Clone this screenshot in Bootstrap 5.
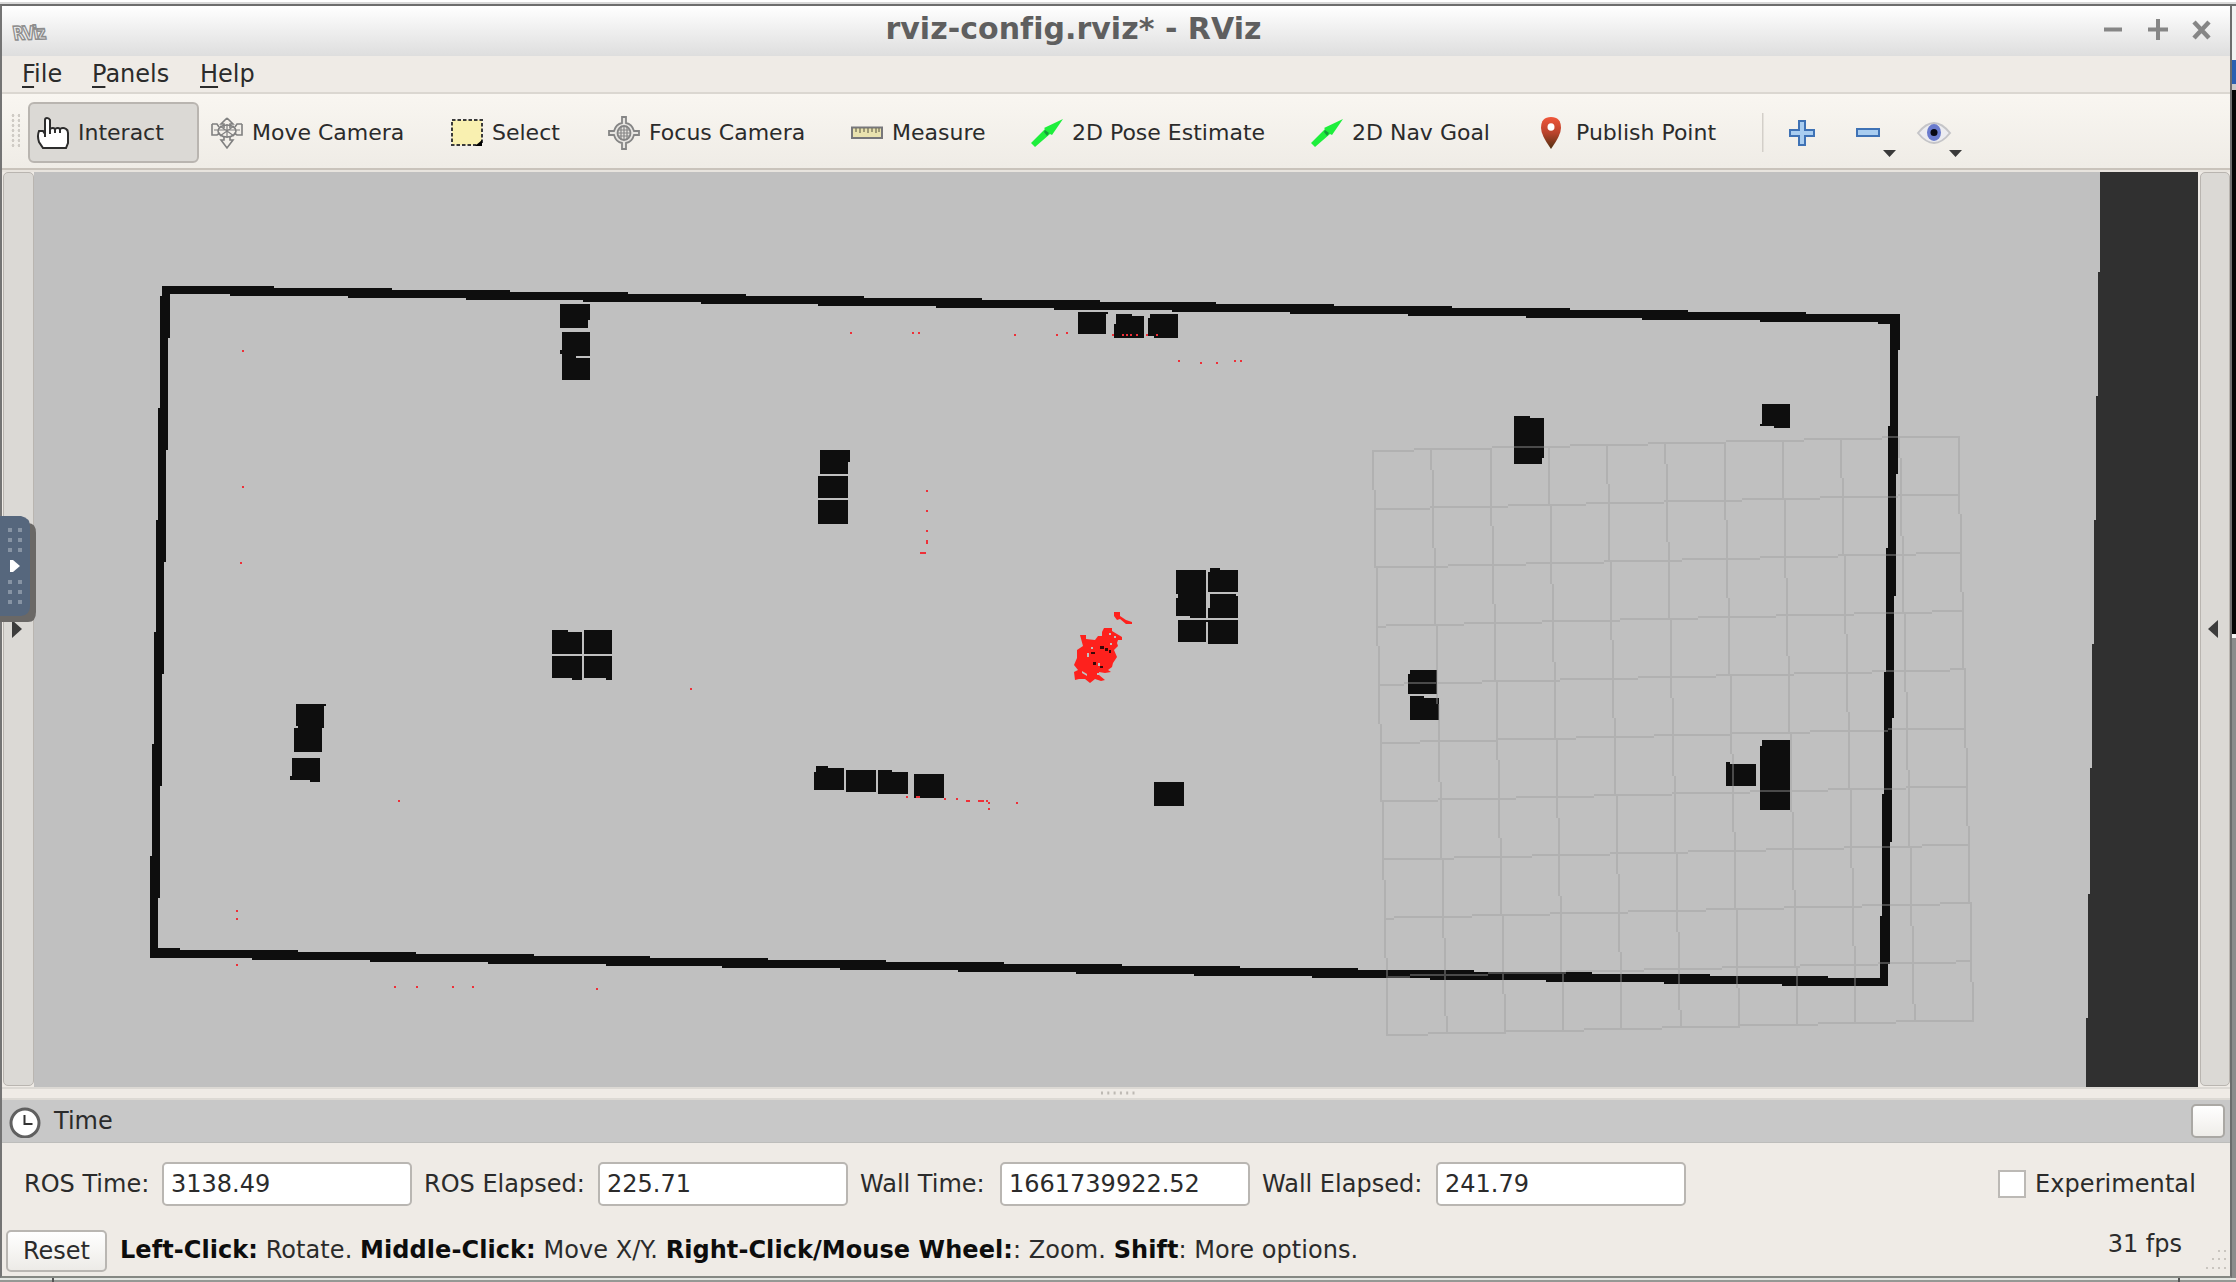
<!DOCTYPE html>
<html lang="en">
<head>
<meta charset="utf-8">
<title>rviz-config.rviz* - RViz</title>
<link href="https://cdn.jsdelivr.net/npm/bootstrap@5.3.0/dist/css/bootstrap.min.css" rel="stylesheet">
<script src="https://cdn.jsdelivr.net/npm/bootstrap@5.3.0/dist/js/bootstrap.bundle.min.js"></script>
<style>
body{width:2236px;height:1282px;overflow:hidden;background:#fff;font-family:"DejaVu Sans",sans-serif;font-size:24px;line-height:28px;color:#2b2b2b;white-space:nowrap}
svg{display:block;flex:none}
.desk{width:2236px;height:1282px}
.desk-top{height:4px;background:linear-gradient(#fff 0 2px,#d9d9d9 2px)}
.win{width:2232px;height:1274px;border:2px solid #6d6d6d;border-left-color:#747474;border-bottom-color:#858883;background:#efebe6}
.backdrop{width:4px;height:1274px;background:linear-gradient(#6d6d6d 0 2px,#f2f2f2 2px 56px,#2c5fb0 56px 80px,#c9c9c9 80px 86px,#050505 86px 630px,#f4f4f4 630px 634px,#8c8c8c 634px)}
.title-bar{height:50px;background:linear-gradient(#fff,#dedede)}
.title-left{width:160px}
.title-right{width:245px}
.title-text{font-weight:700;font-size:30px;line-height:36px;letter-spacing:.04px;color:#5f5f5f;margin-top:-4px}
.menu-row{height:36px;padding-left:20px}
.menu-row u{text-decoration-thickness:2px;text-underline-offset:4px}
.tool-row{height:80px;border-top:2px solid #dbd7d1;background:linear-gradient(#f9f6f1,#efece6 74px,#c9c3bb 74px 76px,#e8e4de 76px);padding:8px 0 0 26px}
.tool{height:61px;padding-left:9px;gap:9px;font-size:22px}
.tool.on{background:#dbd9d5;border:2px solid #b9b5b0;border-radius:6px;padding-left:7px}
.grip{width:10px;height:36px;margin:11px 0 0 -18px;background:radial-gradient(circle,#cfcbc5 1.3px,transparent 1.6px) 0 0/6px 5px}
.side{height:914px;background:#dbd9d5;border:1.5px solid #b9b5b0;border-radius:5px}
.split{height:13px;background:linear-gradient(#dcd9d4 2px,transparent 2px 11px,#dcd9d4 11px)}
.time-head{height:43px;background:#c8c8c8;border-bottom:1px solid #bdbdbb;padding:0 5px 0 7px}
.mini-btn{width:34px;height:34px;border:2px solid #aaa8a4;border-radius:5px;background:linear-gradient(#fff,#efede9)}
.fields{height:81px;padding-left:22px}
.field{width:250px;height:44px;border:2px solid #b9b6b2;border-radius:5px;background:#fff;color:#2b2b2b;padding:0 7px;font-size:24px;line-height:28px;font-family:inherit}
.check{width:28px;height:28px;border:2px solid #bcb9b5;background:#fff}
.status{height:52px;padding:6px 0 0 4px}
.reset{width:101px;height:42px;border:2px solid #b9b6b2;border-radius:5px;background:linear-gradient(#fff,#edebe7);font-size:24px;line-height:28px;padding:0;color:#2b2b2b}
.status b{color:#0d0d0d}
.hint{margin:6px 0 0 13px;letter-spacing:.065px}
.handle{left:0;top:516px;width:36px;height:106px}
.bottom-strip{height:4px;background:linear-gradient(90deg,transparent 52px,#555 52px 54px,transparent 54px 2178px,#555 2178px 2180px,transparent 2180px),linear-gradient(#e3e6e2 0 2px,#959894 2px)}
</style>
</head>
<body>
<div class="desk position-relative d-flex flex-column">
  <div class="desk-top"></div>
  <div class="d-flex">
  <div class="win d-flex flex-column">
    <header class="title-bar d-flex align-items-center justify-content-between">
      <div class="title-left"><svg width="48" height="36"><text x="0" y="0" transform="translate(12 27) rotate(-2) skewX(8) scale(.78 1)" font-family="DejaVu Sans" font-weight="bold" font-size="19" fill="#eee" stroke="#8d8d8d" stroke-width="1.6" letter-spacing="-1.5">RViz</text></svg></div>
      <div class="title-text">rviz-config.rviz* - RViz</div>
      <div class="title-right d-flex justify-content-end"><svg width="128" height="36" fill="none" stroke="#868686" stroke-width="4"><path d="M2 16.500h18M46 16.500h20M56 6v21"/><path d="M92 9l15 16M107 9L92 25" stroke-width="4.500"/></svg></div>
    </header>
    <nav class="menu-row d-flex align-items-center">
      <div style="width:70px"><u>F</u>ile</div><div style="width:108px"><u>P</u>anels</div><div><u>H</u>elp</div>
    </nav>
    <div class="tool-row d-flex">
      <div class="grip"></div><div style="width:8px"></div>
      <div class="tool on d-flex align-items-center" style="width:171px">
        <svg width="32" height="34" fill="#fff" stroke="#2d2d2d" stroke-width="2"><path d="M8 21V4q0-2 2-2t3 2v9q3-2 5 0q3-2 5 0q3-2 6 0q2 1 2 4v10l-2 5H6l-4-6q-2-6 0-11h4l2 3"/><path d="M13 13v5M18 13v4M23 13v4" fill="none"/></svg>Interact</div>
      <div style="width:3px"></div>
      <div class="tool d-flex align-items-center" style="width:240px">
        <svg width="32" height="34" fill="none" stroke="#808080" stroke-width="1.600"><path d="M16 2l6 6h-3v4M16 2l-6 6h3v4M1 8h5l2 3M31 8h-5l-2 3M1 8v11h5l3-2M31 8v11h-5l-3-2M13 20v4h-3l6 8 6-8h-3v-4" fill="#f2efe9"/><ellipse cx="16" cy="15" rx="9" ry="6"/><path d="M9 10l14 10M23 10L9 20M16 8v14M3 14h26" stroke-width="1.200"/></svg>Move Camera</div>
      <div class="tool d-flex align-items-center" style="width:157px">
        <svg width="32" height="30"><rect x="1" y="2" width="30" height="25" fill="#f9f0b0" stroke="#3a3a3a" stroke-width="2" stroke-dasharray="3.500 2"/><path d="M31 22v6h-7z"/></svg>Select</div>
      <div class="tool d-flex align-items-center" style="width:243px">
        <svg width="32" height="34" fill="#e7e5e1" stroke="#858585" stroke-width="1.800"><path d="M14 1h4v6q6 1 8 8h5v4h-5q-2 7-8 8v6h-4v-6q-6-1-8-8H1v-4h5q2-7 8-8z"/><ellipse cx="16" cy="17" rx="6.500" ry="7"/><path d="M13 10v14M16 10v14M19 10v14M10 14h12M10 17h12M10 20h12" stroke-width="1.200"/></svg>Focus Camera</div>
      <div class="tool d-flex align-items-center" style="width:180px">
        <svg width="32" height="14"><rect x="1" y="1.500" width="30" height="10.500" fill="#e9e2ae" stroke="#77777a" stroke-width="2"/><path d="M5 2v4M9 2v5M13 2v4M17 2v5M21 2v4M25 2v5M28 2v4" stroke="#77735a" stroke-width="1.300"/></svg>Measure</div>
      <div class="tool d-flex align-items-center" style="width:280px">
        <svg width="32" height="30"><path d="M0 25L14 11l-1-1L32 1 21 17l-2-1L4 29z" fill="#1eef3c"/><path d="M14 12l4 3-2 3-3-4z" fill="#14a13a"/></svg>2D Pose Estimate</div>
      <div class="tool d-flex align-items-center" style="width:223px">
        <svg width="32" height="30"><path d="M0 25L14 11l-1-1L32 1 21 17l-2-1L4 29z" fill="#1eef3c"/><path d="M14 12l4 3-2 3-3-4z" fill="#14a13a"/></svg>2D Nav Goal</div>
      <div class="tool d-flex align-items-center" style="width:237px">
        <svg width="33" height="34"><defs><linearGradient id="pin" x2="0" y2="1"><stop stop-color="#f0563a"/><stop offset=".5" stop-color="#b9432c"/><stop offset="1" stop-color="#503010"/></linearGradient></defs><path d="M17 1q10 0 10 11 0 7-10 21Q7 19 7 12 7 1 17 1z" fill="url(#pin)"/><ellipse cx="17" cy="11" rx="3.500" ry="3.800" fill="#fff"/></svg>Publish Point</div>
      <svg width="210" height="61"><path d="M.500 11v39" stroke="#d3cfc9" stroke-width="2"/>
        <path d="M37 19h6v9h9v6h-9v9h-6v-9h-9v-6h9z" fill="#a9cdf0" stroke="#3f72b5" stroke-width="2"/>
        <rect x="95" y="27" width="22" height="7" fill="#a9cdf0" stroke="#3f72b5" stroke-width="2"/>
        <path d="M121 48h13l-6.500 7zM187 48h13l-6.500 7z" fill="#3a3a3a"/>
        <path d="M156 31q16-20 32 0-16 20-32 0z" fill="#ececf0" stroke="#c5c5c8" stroke-width="2"/><ellipse cx="172" cy="30.500" rx="7" ry="8.500" fill="#6a7bcd"/><circle cx="172" cy="30.500" r="3.500" fill="#080812"/></svg>
    </div>
    <main class="d-flex" style="height:915px">
      <div class="side d-flex align-items-center" style="width:31px;margin-left:1px"><svg width="28" height="20"><path d="M8 1l10 9-10 9z" fill="#3c3c3c"/></svg></div>
      <svg id="view" width="2164" height="915" viewBox="34 172 2164 915" shape-rendering="crispEdges">
        <rect x="34" y="171" width="2164" height="917" fill="#c0c0c0"/>
        <path fill="#303030" d="M2198 171H2100V272h-2V396h-2V520h-2V644h-2V768h-2V894h-2V1018h-2V1088H2198z"/>
        <path fill="#0e0e0e" fill-rule="evenodd" d="M162 286H274v2H392v2H510v2H628v2H746v2H864v2H982v2H1100v2H1216v2H1334v2H1452v2H1570v2H1688v2H1806v2H1900V350h-2V474h-2V596h-2V718h-2V842h-2V964h-2V986H1782v-2H1664v-2H1546v-2H1430v-2H1312v-2H1194v-2H1076v-2H958v-2H840v-2H722v-2H606v-2H488v-2H370v-2H252v-2H150V856h2V744h2V632h2V520h2V408h2V296h2z
          M170 294H230v2H348v2H466v2H583v2H701v2H818v2H936v2H1054v2H1172v2H1290v2H1408v2H1526v2H1642v2H1760v2H1878v2H1890V426h-2V548h-2V672h-2V794h-2V916h-2V978H1828v-2H1710v-2H1592v-2H1474v-2H1358v-2H1240v-2H1122v-2H1004v-2H886v-2H768v-2H650v-2H534v-2H416v-2H298v-2H180v-2H158V898h2V786h2V674h2V562h2V450h2V338h2z"/>
        <path fill="#0e0e0e" d="M560 304h30v16h-2v8h-28zM562 332h28v24h-14v2h14v22h-28v-26h-2v-4h2z
          M552 630h16v2h14v22h-30zM584 630h28v24h-28zM552 656h30v24h-10v-2h-20zM584 656h28v24h-6v-2h-22z
          M296 704h30v2h-2v22h-2v24h-28v-24h4v-2h-2zM292 758h28v24h-10v-2h-20v-4h2z
          M820 450h30v12h-2v12h-28zM818 476h30v22h-30zM818 500h30v24h-30z
          M1078 312h30v2h-2v20h-28zM1116 314h16v2h12v22h-30v-14h2zM1150 314h28v24h-24v-2h-6v-18h2z
          M1176 570h30v48h-16v-2h-14v-18h2v-4h-2zM1210 568h10v2h18v22h-30v-20h2zM1210 594h26v2h2v22h-30v-10h2zM1178 620h28v22h-28zM1206 620h32v24h-30v-22h-2z
          M816 766h12v2h16v22h-30v-18h2zM846 770h30v22h-30zM878 770h14v2h16v22h-30zM914 774h30v24h-30zM1154 782h30v24h-30z
          M1514 416h16v2h14v40h-2v6h-28zM1762 404h28v24h-16v-2h-14v-2h2z
          M1410 670h27v24h-29v-20h2zM1410 696h14v2h15v22h-29zM1726 762h4v2h26v22h-30zM1762 740h28v70h-30v-64h2z"/>
        <path id="grid" fill="#9d9d9d" fill-opacity=".42"/>
        <path id="scan" fill="#ee3038" shape-rendering="auto"/>
        <g shape-rendering="auto">
          <path fill="#fe211d" d="M1114 612h6v4l6 4 6 2v2h-6l-6-5-3 1-3-4z"/>
          <path fill="#fe211d" d="M1104 628h8v3l5 3 5 3v3h-4l-1 3 1 3-4 4 3 7-4 6-1 4-4 3 3 2-6 1-6-1 0 3 6 5-4 1-6-2-5 4-5-4-6 0-4 1-1-8 4-2-4-5 3-7v-8l6-4-3-11h6v4l9 1 3-4 4 0 0-4z"/>
          <path fill="#c0c0c0" d="M1087 653h2v4h-2zM1091 647h2v2h-2zM1109 633h2v2h-2zM1114 636h2v2h-2zM1110 643h2v2h-2zM1082 671l5 3v2l-5-3zM1097 673h2v2h-2zM1098 663h2v3h-2z"/>
          <path fill="#3a0808" d="M1100 646h4v3h-4zM1105 648h3v3h-3zM1109 650h2v3h-2zM1091 652h4v2h-4zM1093 662h3v3h-3zM1100 666h3v2h-3z"/>
        </g>
      </svg>
      <div class="side d-flex align-items-center ms-auto" style="width:30px"><svg width="27" height="20"><path d="M17 1L7 10l10 9z" fill="#3c3c3c"/></svg></div>
    </main>
    <div class="split d-flex justify-content-center"><svg width="36" height="4" style="margin:4px 0 0 4px"><path d="M1 2h36" stroke="#bdb9b3" stroke-width="3" stroke-dasharray="2 4.300"/></svg></div>
    <div class="time-head d-flex align-items-center">
      <svg width="32" height="34"><ellipse cx="16" cy="19" rx="14" ry="14" fill="#fff" stroke="#606060" stroke-width="3"/><path d="M15.500 11v9h8" fill="none" stroke="#333" stroke-width="2"/></svg>
      <span style="margin-left:13px">Time</span><div class="mini-btn ms-auto"></div>
    </div>
    <div class="fields d-flex align-items-center">
      <label style="width:138px">ROS Time:</label><input class="field" value="3138.49">
      <label style="width:186px;padding-left:12px">ROS Elapsed:</label><input class="field" value="225.71">
      <label style="width:152px;padding-left:12px">Wall Time:</label><input class="field" value="1661739922.52">
      <label style="width:186px;padding-left:12px">Wall Elapsed:</label><input class="field" value="241.79">
      <div class="check ms-auto"></div><label style="width:204px;padding-left:9px;letter-spacing:.07px">Experimental</label>
    </div>
    <footer class="status d-flex">
      <button class="reset">Reset</button>
      <div class="hint"><b>Left-Click:</b> Rotate. <b>Middle-Click:</b> Move X/Y. <b>Right-Click/Mouse Wheel:</b>: Zoom. <b>Shift</b>: More options.</div>
      <div class="ms-auto">31 fps</div>
      <svg class="align-self-end" width="48" height="26" fill="#c9c5bf"><path d="M36 0h2v2h-2zM42 0h2v2h-2zM30 8h2v2h-2zM36 8h2v2h-2zM42 8h2v2h-2zM24 17h2v2h-2zM30 17h2v2h-2zM36 17h2v2h-2zM42 17h2v2h-2z"/></svg>
    </footer>
  </div>
  <div class="backdrop"></div>
  </div>
  <div class="bottom-strip"></div>
  <svg class="handle position-absolute" viewBox="0 0 36 106">
    <path d="M0 7h28q8 0 8 10v79q0 10-8 10H0z" fill="#6a6866"/>
    <path d="M0 0h21q9 2 9 10v80q0 9-9 10H0z" fill="#56677d"/>
    <path d="M8 12h4v4H8zM18 12h4v4h-4zM8 22h4v4H8zM18 22h4v4h-4zM8 32h4v4H8zM18 32h4v4h-4zM8 64h4v4H8zM18 64h4v4h-4zM8 74h4v4H8zM18 74h4v4h-4zM8 84h4v4H8zM18 84h4v4h-4z" fill="#8794a4"/>
    <path d="M10 44h3l7 6-7 6h-3z" fill="#fff"/>
  </svg>
</div>
<script>
// Reference grid: 10 x 10 cells, rasterised in 2px steps
const P = (u, v) => [1373 + 585 * u + 15 * v, 451 - 15 * u + 584 * v];
let g = '';
const even = n => 2 * Math.round((n - 1) / 2);
for (let i = 0; i <= 10; i++) {
  let [x0, y0] = P(0, i / 10), [x1, y1] = P(1, i / 10), run = null;
  for (let x = even(x0); x <= x1; x += 2) {
    const y = even(y0 + (y1 - y0) * (x - x0) / (x1 - x0));
    if (run && run.y === y) run.w += 2;
    else { if (run) g += `M${run.x} ${run.y}h${run.w}v2h-${run.w}z`; run = {x, y, w: 2}; }
  }
  g += `M${run.x} ${run.y}h${run.w}v2h-${run.w}z`;
  [x0, y0] = P(i / 10, 0); [x1, y1] = P(i / 10, 1); run = null;
  for (let y = even(y0); y <= y1; y += 2) {
    const x = even(x0 + (x1 - x0) * (y - y0) / (y1 - y0));
    if (run && run.x === x) run.h += 2;
    else { if (run) g += `M${run.x} ${run.y}h2v${run.h}h-2z`; run = {x, y, h: 2}; }
  }
  g += `M${run.x} ${run.y}h2v${run.h}h-2z`;
}
document.getElementById('grid').setAttribute('d', g);
// Laser scan hits: x, y, optional width and height
const hits = [[851,333],[913,333],[919,333],[1015,335],[1057,335],[1067,333],[1113,335],[1123,335],[1127,335],[1131,335],[1137,335],[1147,335],[1157,335],[1179,361],[1201,363],[1217,363],[1235,361],[1241,361],[927,491],[927,511],[927,531],[927,542,2,4],[923,553,6,2],[243,351],[243,487],[241,563],[691,689],[399,801],[237,911],[237,919],[237,965],[395,987],[417,987],[453,987],[473,987],[597,989],[907,797],[918,797,4,2],[945,799],[957,799],[968,801,4,2],[981,801,6,2],[987,801],[989,803],[989,809],[1017,803]];
document.getElementById('scan').setAttribute('d', hits.map(([x, y, w = 2, h = 2]) => `M${x - w / 2} ${y - h / 2}h${w}v${h}h-${w}z`).join(''));
</script>
</body>
</html>
